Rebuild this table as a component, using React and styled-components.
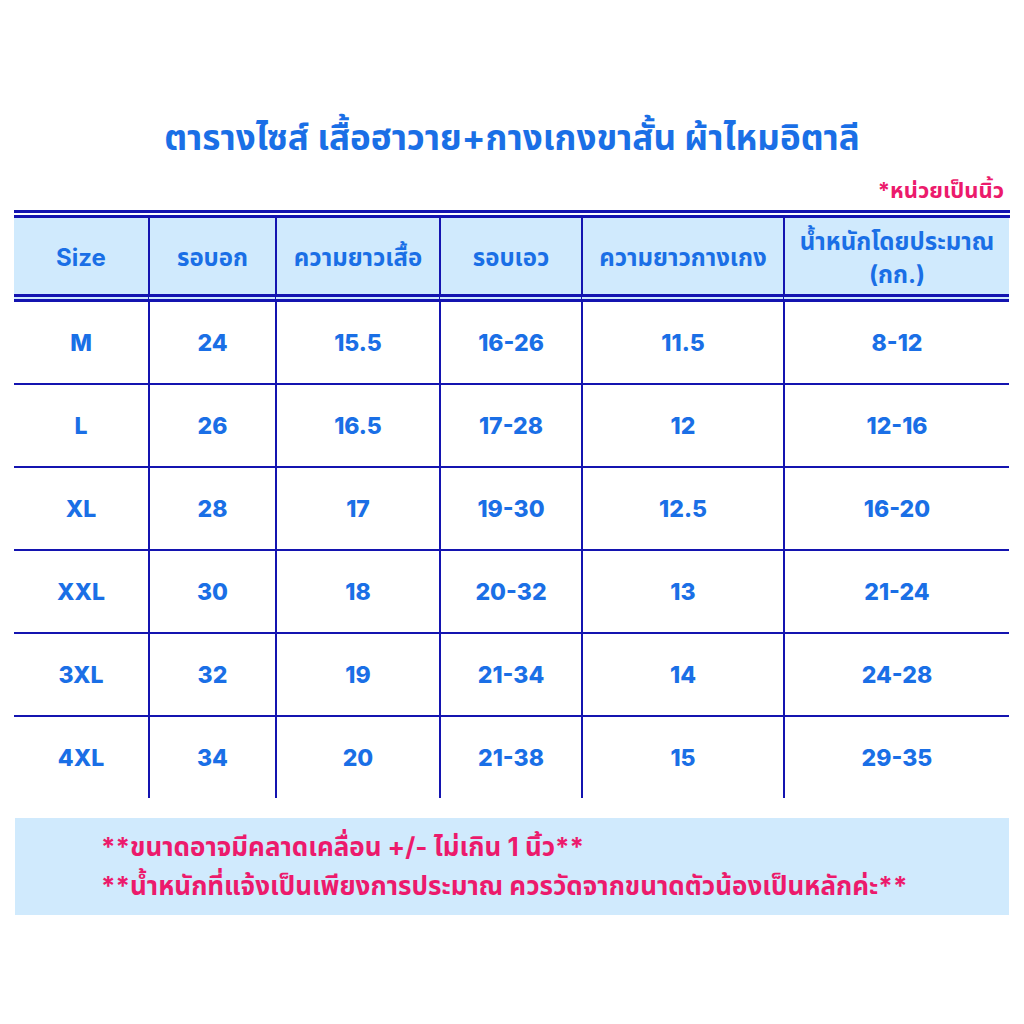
import React from "react";
import styled, { createGlobalStyle } from "styled-components";

const GlobalStyle = createGlobalStyle`
  html, body {
    margin: 0;
    padding: 0;
    background: #ffffff;
  }
  body {
    font-family: Inter, "Noto Sans Thai", "Noto Sans", "Liberation Sans", sans-serif;
  }
`;

const BLUE = "#1a6fe6";
const PINK = "#ec1a6c";
const LINE = "#1414b0";
const PALE = "#d0eafd";

const Page = styled.div`
  width: 1024px;
  height: 1024px;
  padding: 117px 14px 0 14px;
  box-sizing: border-box;
  display: flex;
  flex-direction: column;
`;

const Title = styled.h1`
  margin: 0;
  text-align: center;
  color: ${BLUE};
  font-size: 35px;
  font-weight: 700;
  line-height: 40px;
`;

const Unit = styled.div`
  margin-top: 18px;
  padding-right: 6px;
  text-align: right;
  color: ${PINK};
  font-size: 22px;
  font-weight: 700;
  line-height: 30px;
  height: 30px;
`;

const Table = styled.div`
  margin-top: 5px;
  display: grid;
  grid-template-columns: 134px 127px 164px 142px 202px 226px;
  border-top: 8px double ${LINE};
`;

const Row = styled.div`
  display: contents;
`;

const Cell = styled.div`
  box-sizing: border-box;
  height: ${(p) => (p.$head ? 84 : p.$last ? 81 : 83)}px;
  display: flex;
  align-items: center;
  justify-content: center;
  text-align: center;
  background: ${(p) => (p.$head ? PALE : "transparent")};
  border-left: ${(p) => (p.$first ? "none" : `2px solid ${LINE}`)};
  border-bottom: ${(p) =>
    p.$head ? `8px double ${LINE}` : p.$last ? "none" : `2px solid ${LINE}`};
  color: ${BLUE};
  font-size: ${(p) => (p.$head ? 24 : 23)}px;
  font-weight: ${(p) => (p.$head ? 700 : 800)};
  line-height: ${(p) => (p.$head ? 33 : 36)}px;
  padding-top: ${(p) => (p.$head ? 3 : 0)}px;
`;

const Note = styled.div`
  margin-top: 20px;
  margin-left: 1px;
  width: 994px;
  height: 97px;
  background: ${PALE};
  box-sizing: border-box;
  padding: 9px 0 0 86px;
  color: ${PINK};
  font-size: 26px;
  font-weight: 700;
  line-height: 39px;
`;

const head = ["Size", "รอบอก", "ความยาวเสื้อ", "รอบเอว", "ความยาวกางเกง", "น้ำหนักโดยประมาณ (กก.)"];

const rows = [
  ["M", "24", "15.5", "16-26", "11.5", "8-12"],
  ["L", "26", "16.5", "17-28", "12", "12-16"],
  ["XL", "28", "17", "19-30", "12.5", "16-20"],
  ["XXL", "30", "18", "20-32", "13", "21-24"],
  ["3XL", "32", "19", "21-34", "14", "24-28"],
  ["4XL", "34", "20", "21-38", "15", "29-35"],
];

const App = () => {
  return (
    <Page>
      <GlobalStyle />
      <Title>ตารางไซส์ เสื้อฮาวาย+กางเกงขาสั้น ผ้าไหมอิตาลี</Title>
      <Unit>*หน่วยเป็นนิ้ว</Unit>
      <Table>
        <Row>
          {head.map((h, i) => (
            <Cell key={h} $head $first={i === 0}>
              {i === 5 ? (
                <span>
                  น้ำหนักโดยประมาณ
                  <br />
                  (กก.)
                </span>
              ) : (
                h
              )}
            </Cell>
          ))}
        </Row>
        {rows.map((r, ri) => (
          <Row key={r[0]}>
            {r.map((v, i) => (
              <Cell key={i} $first={i === 0} $last={ri === rows.length - 1}>
                {v}
              </Cell>
            ))}
          </Row>
        ))}
      </Table>
      <Note>
        <div>**ขนาดอาจมีคลาดเคลื่อน +/- ไม่เกิน 1 นิ้ว**</div>
        <div>**น้ำหนักที่แจ้งเป็นเพียงการประมาณ ควรวัดจากขนาดตัวน้องเป็นหลักค่ะ**</div>
      </Note>
    </Page>
  );
};

export default App;
